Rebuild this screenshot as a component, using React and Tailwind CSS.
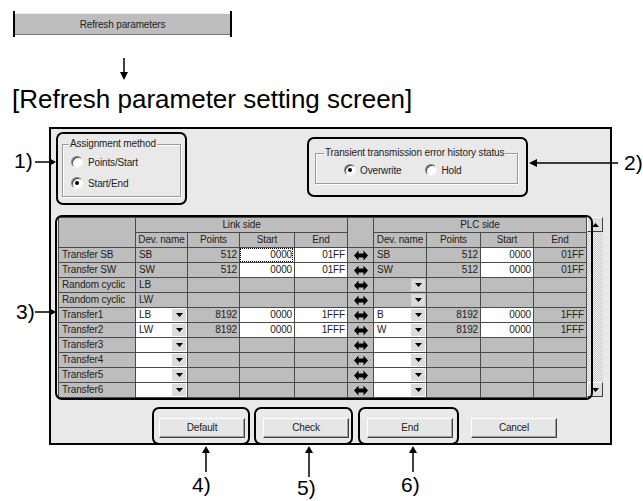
import React from 'react';

const GRAY = 'bg-[#bdbdbd]';

function Radio({ checked }) {
  return (
    <span className="relative inline-block w-[12px] h-[12px] shrink-0 rounded-full bg-white border border-t-[#808080] border-l-[#808080] border-r-[#f4f4f4] border-b-[#f4f4f4] shadow-[inset_1px_1px_0_#404040]">
      {checked && <span className="absolute left-[3px] top-[3px] w-[4px] h-[4px] rounded-full bg-black" />}
    </span>
  );
}

function Tri({ up }) {
  return (
    <svg width="7" height="4" viewBox="0 0 7 4">
      <path d={up ? 'M0 4h7L3.5 0z' : 'M0 0h7L3.5 4z'} fill="#000" />
    </svg>
  );
}

function BothArrow() {
  return (
    <svg width="14" height="11" viewBox="0 0 14 11">
      <path d="M0 5.5L4.5 0.5V3.5H9.5V0.5L14 5.5L9.5 10.5V7.5H4.5V10.5Z" fill="#000" />
    </svg>
  );
}

const cellBase = 'border-r border-b border-[#4a4a4a] text-[10px] leading-[14px] overflow-hidden whitespace-nowrap';

function Cell({ c }) {
  if (c.arrow) {
    return (
      <div className={`${cellBase} ${GRAY} flex items-center justify-center`}>
        <BothArrow />
      </div>
    );
  }
  const bg = c.w ? 'bg-white' : GRAY;
  if (c.dd) {
    return (
      <div className={`${cellBase} ${bg} flex items-stretch`}>
        <span className="flex-1 pl-[3px]">{c.t}</span>
        <span className="w-[14px] flex items-center justify-center bg-[#dcdcdc] my-[1px] mr-[1px]">
          <Tri />
        </span>
      </div>
    );
  }
  return (
    <div className={`${cellBase} ${bg} ${c.r ? 'text-right pr-[2px]' : 'pl-[3px]'}`}>
      <span className={c.focus ? 'block outline outline-1 outline-dotted outline-black -outline-offset-1 -mr-[1px] pr-[1px]' : ''}>
        {c.t}
      </span>
    </div>
  );
}

const E = { t: '' };
const A = { arrow: true };

const rows = [
  ['Transfer SB', { t: 'SB' }, { t: '512', r: 1 }, { t: '0000', r: 1, w: 1, focus: 1 }, { t: '01FF', r: 1, w: 1 }, A, { t: 'SB' }, { t: '512', r: 1 }, { t: '0000', r: 1, w: 1 }, { t: '01FF', r: 1 }],
  ['Transfer SW', { t: 'SW' }, { t: '512', r: 1 }, { t: '0000', r: 1, w: 1 }, { t: '01FF', r: 1, w: 1 }, A, { t: 'SW' }, { t: '512', r: 1 }, { t: '0000', r: 1, w: 1 }, { t: '01FF', r: 1 }],
  ['Random cyclic', { t: 'LB' }, E, E, E, A, { t: '', dd: 1 }, E, E, E],
  ['Random cyclic', { t: 'LW' }, E, E, E, A, { t: '', dd: 1 }, E, E, E],
  ['Transfer1', { t: 'LB', w: 1, dd: 1 }, { t: '8192', r: 1 }, { t: '0000', r: 1, w: 1 }, { t: '1FFF', r: 1, w: 1 }, A, { t: 'B', w: 1, dd: 1 }, { t: '8192', r: 1 }, { t: '0000', r: 1, w: 1 }, { t: '1FFF', r: 1 }],
  ['Transfer2', { t: 'LW', w: 1, dd: 1 }, { t: '8192', r: 1 }, { t: '0000', r: 1, w: 1 }, { t: '1FFF', r: 1, w: 1 }, A, { t: 'W', w: 1, dd: 1 }, { t: '8192', r: 1 }, { t: '0000', r: 1, w: 1 }, { t: '1FFF', r: 1 }],
  ['Transfer3', { t: '', w: 1, dd: 1 }, E, E, E, A, { t: '', w: 1, dd: 1 }, E, E, E],
  ['Transfer4', { t: '', w: 1, dd: 1 }, E, E, E, A, { t: '', w: 1, dd: 1 }, E, E, E],
  ['Transfer5', { t: '', w: 1, dd: 1 }, E, E, E, A, { t: '', w: 1, dd: 1 }, E, E, E],
  ['Transfer6', { t: '', w: 1, dd: 1 }, E, E, E, A, { t: '', w: 1, dd: 1 }, E, E, E],
];

const subHeads = ['Dev. name', 'Points', 'Start', 'End'];

function WinButton({ children }) {
  return (
    <button className="w-[86px] h-[20px] bg-[#e6e6e6] border border-t-white border-l-white border-r-[#404040] border-b-[#404040] shadow-[inset_-1px_-1px_0_#a0a0a0] text-[10px] leading-none flex items-center justify-center">
      {children}
    </button>
  );
}

function ScrollBtn({ up }) {
  return (
    <div className="h-[15px] bg-[#dedede] border border-t-white border-l-white border-r-[#404040] border-b-[#404040] flex items-center justify-center">
      <Tri up={up} />
    </div>
  );
}

const groupBox = 'border border-[#9a9a9a] shadow-[1px_1px_0_#fff,inset_1px_1px_0_#fff]';

export default function App() {
  return (
    <div className="relative w-[643px] h-[501px] bg-white overflow-hidden font-['Liberation_Sans',Arial,sans-serif] text-black">
      <div className="pl-[13px] pt-[11px]">
        <div className="w-[219px] h-[26px] border-x-2 border-black flex flex-col justify-center">
          <div className="h-[22px] bg-[#bdbdbd] border-t border-t-[#f0f0f0] border-b border-b-[#7a7a7a] flex items-center justify-center text-[10px] tracking-[-0.15px] text-[#222]">
            Refresh parameters
          </div>
        </div>
      </div>

      <svg className="ml-[119px] mt-[21px] block" width="10" height="22" viewBox="0 0 10 22">
        <path d="M5 0V15" stroke="#000" strokeWidth="1.5" />
        <path d="M1 14H9L5 22Z" fill="#000" />
      </svg>

      <h1 className="ml-[12px] mt-[4px] text-[26px] leading-[30px]">[Refresh parameter setting screen]</h1>

      <div className="ml-[49px] mt-[13px] w-[563px] h-[318px] border-2 border-black bg-[#e9e9e9] text-[10px] tracking-[-0.15px] text-[#222]">
        <div className="flex items-start">
          <fieldset className={`ml-[11px] mt-[9px] w-[119px] h-[59px] ${groupBox}`}>
            <legend className="ml-[6px] px-[1px] leading-[12px] bg-[#e9e9e9]">Assignment method</legend>
            <div className="pl-[8px] pt-[5px] flex flex-col gap-[7px]">
              <label className="flex items-center gap-[5px] h-[14px]">
                <Radio /> Points/Start
              </label>
              <label className="flex items-center gap-[5px] h-[14px]">
                <Radio checked /> Start/End
              </label>
            </div>
          </fieldset>
          <fieldset className={`ml-[134px] mt-[18px] w-[203px] h-[37px] ${groupBox}`}>
            <legend className="ml-[8px] px-[1px] leading-[12px] bg-[#e9e9e9]">Transient transmission error history status</legend>
            <div className="pl-[28px] pt-[4px] flex items-center h-[18px]">
              <label className="flex items-center gap-[4px] h-[14px]">
                <Radio checked /> Overwrite
              </label>
              <label className="ml-[24px] flex items-center gap-[4px] h-[14px]">
                <Radio /> Hold
              </label>
            </div>
          </fieldset>
        </div>

        <div className="ml-[7px] mt-[20px] flex">
          <div className="grid grid-cols-[77px_52px_52px_55px_53px_26px_53px_54px_53px_53px] grid-rows-[repeat(12,15px)] border-l border-t border-[#4a4a4a] w-[529px]">
            <div className={`${cellBase} ${GRAY} row-span-2`} />
            <div className={`${cellBase} ${GRAY} col-span-4 text-center`}>Link side</div>
            <div className={`${cellBase} ${GRAY} row-span-2`} />
            <div className={`${cellBase} ${GRAY} col-span-4 text-center`}>PLC side</div>
            {[...subHeads, ...subHeads].map((h, i) => (
              <div key={i} className={`${cellBase} ${GRAY} text-center`}>{h}</div>
            ))}
            {rows.map((r, ri) => (
              <React.Fragment key={ri}>
                <div className={`${cellBase} ${GRAY} pl-[3px]`}>{r[0]}</div>
                {r.slice(1).map((c, ci) => (
                  <Cell key={ci} c={c} />
                ))}
              </React.Fragment>
            ))}
          </div>
          <div className="w-[16px] h-[180px] flex flex-col">
            <ScrollBtn up />
            <div className="flex-1 bg-[repeating-conic-gradient(#f4f4f4_0_25%,#c8c8c8_0_50%)] bg-[length:2px_2px]" />
            <ScrollBtn />
          </div>
        </div>

        <div className="ml-[108px] mt-[20px] flex gap-[18px]">
          <WinButton>Default</WinButton>
          <WinButton>Check</WinButton>
          <WinButton>End</WinButton>
          <WinButton>Cancel</WinButton>
        </div>
      </div>

      {/* annotation boxes */}
      <div className="absolute left-[56px] top-[132px] w-[131px] h-[73px] border-2 border-black rounded-[7px] pointer-events-none" />
      <div className="absolute left-[307px] top-[137px] w-[221px] h-[60px] border-2 border-black rounded-[7px] pointer-events-none" />
      <div className="absolute left-[55px] top-[215px] w-[538px] h-[185px] border-2 border-black rounded-[7px] pointer-events-none" />
      <div className="absolute left-[152px] top-[407px] w-[98px] h-[38px] border-2 border-black rounded-[7px] pointer-events-none" />
      <div className="absolute left-[254px] top-[407px] w-[99px] h-[38px] border-2 border-black rounded-[7px] pointer-events-none" />
      <div className="absolute left-[358px] top-[407px] w-[101px] h-[38px] border-2 border-black rounded-[7px] pointer-events-none" />

      <svg className="absolute left-0 top-0 pointer-events-none" width="643" height="501" viewBox="0 0 643 501">
        <g stroke="#000" strokeWidth="1.5">
          <path d="M35 162H50" />
          <path d="M536 163H618" />
          <path d="M35 312H50" />
          <path d="M206 452V472" />
          <path d="M309 452V477" />
          <path d="M413 452V472" />
        </g>
        <g fill="#000">
          <path d="M49 158L56 162L49 166Z" />
          <path d="M529 163L537 159V167Z" />
          <path d="M49 308L56 312L49 316Z" />
          <path d="M202 453L206 446L210 453Z" />
          <path d="M305 453L309 446L313 453Z" />
          <path d="M409 453L413 446L417 453Z" />
        </g>
      </svg>

      <span className="absolute left-[14px] top-[150px] text-[21px] leading-[21px]">1)</span>
      <span className="absolute left-[624px] top-[152px] text-[21px] leading-[21px]">2)</span>
      <span className="absolute left-[16px] top-[301px] text-[21px] leading-[21px]">3)</span>
      <span className="absolute left-[192px] top-[474px] text-[21px] leading-[21px]">4)</span>
      <span className="absolute left-[297px] top-[477px] text-[21px] leading-[21px]">5)</span>
      <span className="absolute left-[401px] top-[474px] text-[21px] leading-[21px]">6)</span>
    </div>
  );
}
